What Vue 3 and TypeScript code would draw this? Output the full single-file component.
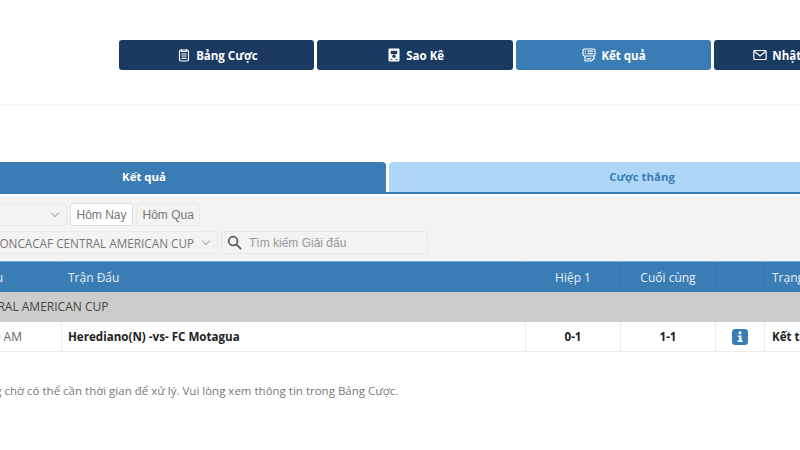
<script setup lang="ts">
interface NavItem { label: string; icon: string; active?: boolean }
const nav: NavItem[] = [
  { label: 'Bảng Cược', icon: 'sheet' },
  { label: 'Sao Kê', icon: 'statement' },
  { label: 'Kết quả', icon: 'result', active: true },
  { label: 'Nhật Ký Giao Dịch', icon: 'mail' },
]
</script>

<template>
  <div class="page">
    <header class="top">
      <nav class="nav">
        <button v-for="n in nav" :key="n.label" class="nav-btn" :class="{ active: n.active }">
          <svg class="nav-icon" viewBox="0 0 14 14" fill="none" stroke="currentColor" stroke-width="1.2">
            <template v-if="n.icon === 'sheet'">
              <rect x="2.5" y="2" width="9" height="11" rx="1.5" />
              <path d="M4.500 1v2.500h5V1M4.500 6h5M4.500 8h5M4.500 10.300h5" />
            </template>
            <template v-else-if="n.icon === 'statement'">
              <rect x="1.5" y="0.500" width="11" height="13" rx="1" fill="currentColor" stroke="none" />
              <path d="M3.800 2.800h6.400v3.400H3.800z" fill="#1a3a61" stroke="none" />
              <circle cx="7" cy="8.300" r="1.700" fill="#1a3a61" stroke="none" />
              <path d="M3.500 11.500h2M8.500 11.500h2" stroke="#1a3a61" stroke-width="1" />
            </template>
            <template v-else-if="n.icon === 'result'">
              <path d="M3 8v5h6.500l2.500-2.500V8" />
              <rect x="1" y="1" width="12" height="7" rx="1.500" />
              <path d="M5.500 3.200h5.500M5.500 5.600h5.500M2.800 3.200h1.200M2.800 5.600h1.200M4.800 10.800h4.500" />
            </template>
            <template v-else>
              <rect x="0.800" y="2.500" width="12.400" height="9" rx="1" />
              <path d="M1.500 3.500 7 8l5.500-4.500" />
            </template>
          </svg>
          <span>{{ n.label }}</span>
        </button>
      </nav>
    </header>

    <main class="content">
      <div class="tabs">
        <div class="tab tab-on">Kết quả</div>
        <div class="tab tab-off">Cược thắng</div>
      </div>

      <section class="filters">
        <div class="filter-row">
          <div class="select select-date"><span class="chev"></span></div>
          <button class="day day-on">Hôm Nay</button>
          <button class="day">Hôm Qua</button>
        </div>
        <div class="filter-row">
          <div class="select select-league">
            <span class="league-text">CONCACAF CENTRAL AMERICAN CUP</span>
            <span class="chev"></span>
          </div>
          <div class="search">
            <svg class="search-icon" viewBox="0 0 16 16" fill="none" stroke="#555" stroke-width="1.800">
              <circle cx="6.500" cy="6.500" r="4.700" />
              <path d="m10 10 5 5" />
            </svg>
            <span>Tìm kiếm Giải đấu</span>
          </div>
        </div>
      </section>

      <div class="grid head">
        <div class="cell time-h">Thời Gian Bắt Đầu</div>
        <div class="cell left match">Trận Đấu</div>
        <div class="cell">Hiệp 1</div>
        <div class="cell">Cuối cùng</div>
        <div class="cell"></div>
        <div class="cell left">Trạng Thái</div>
      </div>
      <div class="group"><span>CONCACAF CENTRAL AMERICAN CUP</span></div>
      <div class="grid row">
        <div class="cell time-c">09:00 AM</div>
        <div class="cell left match strong">Herediano(N) -vs- FC Motagua</div>
        <div class="cell strong">0-1</div>
        <div class="cell strong">1-1</div>
        <div class="cell">
          <svg class="info" viewBox="0 0 16 16">
            <rect width="16" height="16" rx="3" fill="#3a7db5" />
            <circle cx="8" cy="3.800" r="1.500" fill="#fff" />
            <path d="M5.800 6.500H9.500V11.500H10.700V13H5.500V11.500H7V8H5.800Z" fill="#fff" />
          </svg>
        </div>
        <div class="cell left strong">Kết thúc</div>
      </div>

      <p class="note">Các cược đang chờ có thể cần thời gian để xử lý. Vui lòng xem thông tin trong Bảng Cược.</p>
    </main>
  </div>
</template>

<style>
html, body { margin: 0; background: #fff; }
</style>

<style scoped>
.page {
  width: 800px;
  height: 450px;
  overflow: hidden;
  background: #fff;
  font-family: "Open Sans", "Noto Sans", sans-serif;
}
.top {
  height: 105px;
  box-sizing: border-box;
  padding: 40px 0 0 119px;
  border-bottom: 1px solid #f6f6f6;
  width: 1000px;
}
.nav { display: flex; gap: 3px; }
.nav-btn {
  width: 195.300px;
  height: 30px;
  flex: none;
  border: 0;
  padding: 0 0 0 1.500px;
  box-sizing: border-box;
  border-radius: 3px;
  background: #1a3a61;
  color: #fff;
  font: 700 11.500px "Open Sans", sans-serif;
  display: flex;
  align-items: center;
  justify-content: center;
  gap: 5px;
}
.nav-btn:last-child { padding-left: 6px; }
.nav-btn.active { background: #3a7db5; }
.nav-icon { width: 14px; height: 14px; }

.content { margin: 57px 0 0 -200px; width: 1200px; }
.tabs {
  display: flex;
  gap: 3px;
  height: 30px;
  padding-left: 102px;
  border-bottom: 2px solid #3a7db5;
}
.tab {
  display: flex;
  align-items: center;
  justify-content: center;
  font-size: 11.400px;
  font-weight: 700;
  border-radius: 4px 4px 0 0;
  box-sizing: border-box;
  padding-bottom: 1px;
}
.tab-on { width: 484px; background: #3a7db5; color: #fff; height: 32px; padding-bottom: 3px; }
.tab-off { width: 506px; background: #aed6f8; color: #3a7db5; }

.filters {
  margin-top: 2px;
  height: 65px;
  box-sizing: border-box;
  padding: 7px 0 0 0;
  background: #f3f3f3;
  font-family: "Liberation Sans", Arial, sans-serif;
  display: flex;
  flex-direction: column;
  gap: 5px;
  color: #666;
}
.filter-row { display: flex; align-items: center; gap: 3px; height: 23px; }
.select {
  height: 23px;
  box-sizing: border-box;
  border: 1px solid #eaeaea;
  border-radius: 3px;
  display: flex;
  align-items: center;
  justify-content: flex-end;
  padding-right: 8px;
}
.select-date { width: 267px; }
.chev {
  width: 5px;
  height: 5px;
  flex: none;
  margin-bottom: 3px;
  border-right: 1px solid #aaa;
  border-bottom: 1px solid #aaa;
  transform: rotate(45deg);
}
.day {
  height: 23px;
  box-sizing: border-box;
  padding: 0 5.500px;
  border: 1px solid #e9e9e9;
  border-radius: 3px;
  background: #f3f3f3;
  color: #777;
  font: 12px "Liberation Sans", Arial, sans-serif;
}
.day-on { background: #fff; border-color: #ddd; }
.select-league {
  width: 418px;
  justify-content: space-between;
  padding-left: 191px;
}
.league-text { font: 11.750px "Open Sans", sans-serif; color: #777; white-space: nowrap; }
.search {
  width: 207px;
  height: 23px;
  box-sizing: border-box;
  border: 1px solid #e8e8e8;
  border-radius: 3px;
  display: flex;
  align-items: center;
  gap: 7px;
  padding-left: 5px;
  font-size: 12px;
  color: #999;
}
.search-icon { width: 15px; height: 15px; flex: none; }

.grid {
  display: grid;
  grid-template-columns: 262px 464px 95px 95px 49px 235px;
}
.cell {
  display: flex;
  align-items: center;
  justify-content: center;
  font-size: 12px;
  white-space: nowrap;
}
.cell.left { justify-content: flex-start; padding-left: 7px; }
.cell.match { padding-left: 6px; }
.head { height: 31px; background: #3a7db5; color: #e6f0f8; border-top: 1px solid #74b0dc; box-sizing: border-box; }
.head .cell { border-right: 1px solid #3776ab; }
.time-h { justify-content: flex-end; padding-right: 58px; }
.group {
  height: 30px;
  background: #ccc;
  color: #444;
  font-size: 12px;
  display: flex;
  align-items: center;
  padding-left: 102px;
  box-sizing: border-box;
  padding-bottom: 1px;
}
.row { height: 30px; border-bottom: 1px solid #ececec; box-sizing: border-box; color: #222; }
.row .cell { border-right: 1px solid #ececec; }
.time-c { color: #666; justify-content: flex-end; padding-right: 39px; }
.strong { font-weight: 700; font-size: 11.600px; }
.info { width: 16px; height: 16px; }
.note { margin: 31px 0 0 124px; font-size: 11.500px; color: #777; white-space: nowrap; }
</style>
